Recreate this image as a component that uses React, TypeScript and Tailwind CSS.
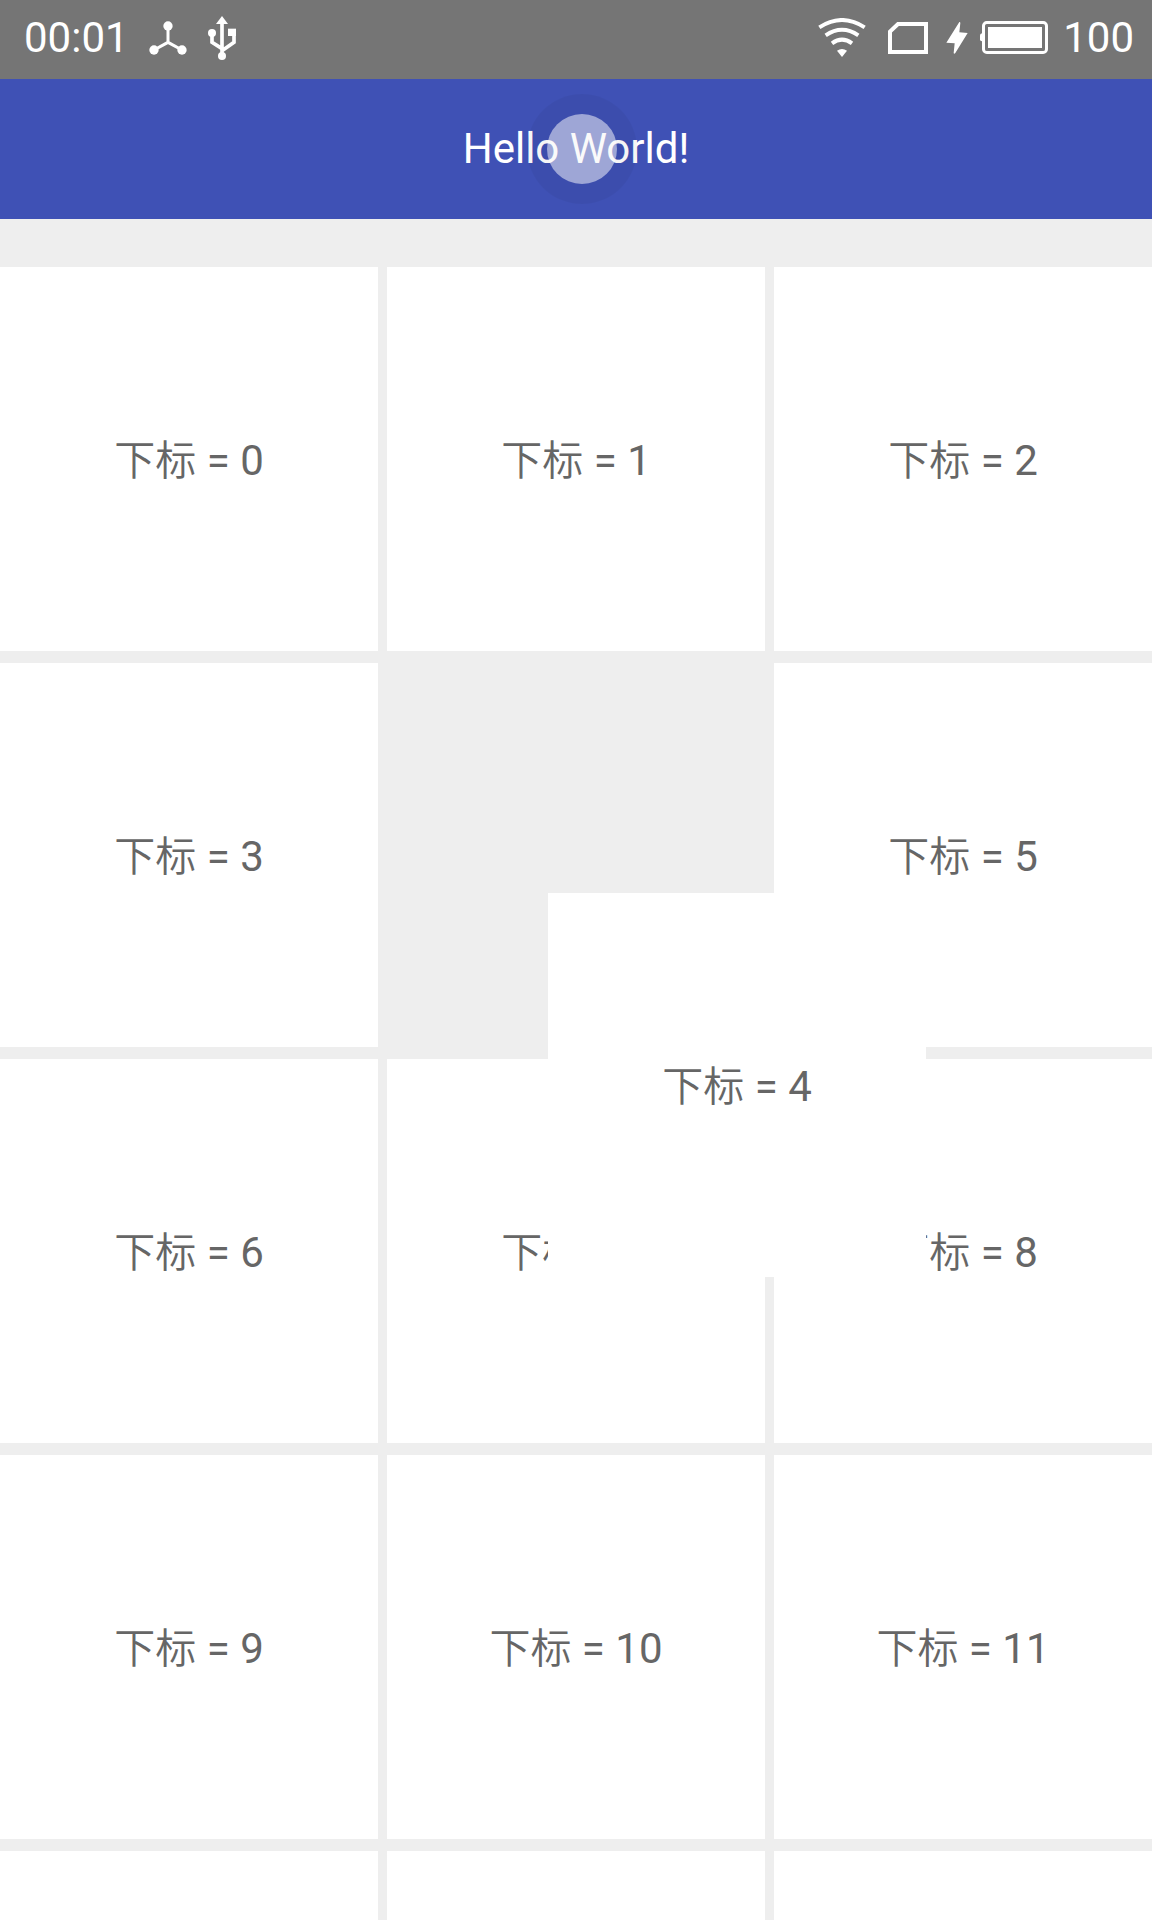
import React from "react";

type Drag = { x: number; y: number };
type Item = { index: number; drag?: Drag };

const items: Item[] = Array.from({ length: 12 }, (_, index) =>
  index === 4 ? { index, drag: { x: 161, y: 230 } } : { index }
);

function NetworkIcon() {
  return (
    <svg viewBox="0 0 114 102" className="h-[34px] w-[38px]" fill="currentColor" aria-hidden="true">
      <path d="M57 16V64M15 87L57 64L99 87" fill="none" stroke="currentColor" strokeWidth="9" />
      <circle cx="57" cy="15" r="14" />
      <circle cx="15" cy="87" r="14" />
      <circle cx="99" cy="87" r="14" />
    </svg>
  );
}

function UsbIcon() {
  return (
    <svg viewBox="0 0 84 132" className="h-11 w-7" fill="currentColor" aria-hidden="true">
      <path d="M42 0L60 24H24Z" />
      <path d="M42 20V120M12 52V79L42 98M78 56V79L42 104" fill="none" stroke="currentColor" strokeWidth="11" />
      <circle cx="12" cy="51" r="12" />
      <circle cx="42" cy="120" r="12" />
      <path d="M60 38H84V60H60Z" />
    </svg>
  );
}

function WifiIcon() {
  return (
    <svg viewBox="0 0 144 117" className="h-[39px] w-12" fill="none" stroke="currentColor" strokeWidth="12" aria-hidden="true">
      <path d="M4 28Q72 -16 140 28" />
      <path d="M23 52Q72 19 121 52" />
      <path d="M42 76Q72 54 102 76" />
      <path d="M57 98Q72 88 87 98L72 117Z" fill="currentColor" stroke="none" />
    </svg>
  );
}

function SimIcon() {
  return (
    <svg viewBox="0 0 120 96" className="h-8 w-10" fill="none" stroke="currentColor" strokeWidth="12" aria-hidden="true">
      <path d="M30 6H114V90H6V29Z" />
    </svg>
  );
}

function BoltIcon() {
  return (
    <svg viewBox="0 0 66 96" className="h-8 w-[22px]" fill="currentColor" aria-hidden="true">
      <path d="M40 0L1 62L26 64L23 93Q24 97 28 93L65 33L40 31L43 3Q42 -1 40 0Z" />
    </svg>
  );
}

function BatteryIcon() {
  return (
    <svg viewBox="0 0 204 99" className="h-[33px] w-[68px]" aria-hidden="true">
      <rect x="10.500" y="4.500" width="189" height="90" rx="10" fill="none" stroke="currentColor" strokeWidth="9" />
      <rect x="24" y="18" width="162" height="63" fill="currentColor" />
      <path d="M6 37Q0 39 0 43V56Q0 60 6 61Z" fill="currentColor" />
    </svg>
  );
}

function StatusBar() {
  return (
    <div className="flex h-[79px] shrink-0 items-center justify-between bg-[#757575] pr-[18px] pb-1 pl-6 text-white">
      <div className="flex items-center">
        <time className="mr-5">00:01</time>
        <NetworkIcon />
        <span className="ml-[21px]">
          <UsbIcon />
        </span>
      </div>
      <div className="flex items-center">
        <WifiIcon />
        <span className="ml-[22px]">
          <SimIcon />
        </span>
        <span className="ml-[18px]">
          <BoltIcon />
        </span>
        <span className="ml-3">
          <BatteryIcon />
        </span>
        <span className="ml-[15px]">100</span>
      </div>
    </div>
  );
}

function TouchPoint() {
  return (
    <span className="absolute top-1/2 left-1/2 ml-1.5 flex size-[110px] -translate-x-1/2 -translate-y-1/2 items-center justify-center rounded-full bg-black/4">
      <span className="size-[70px] rounded-full bg-white/50" />
    </span>
  );
}

function Tile({ index, drag }: Item) {
  return (
    <li
      className={
        drag
          ? "relative z-10 flex h-96 items-center justify-center bg-white pt-1"
          : "flex h-96 items-center justify-center bg-white pt-1"
      }
      style={drag ? { transform: `translate(${drag.x}px, ${drag.y}px)` } : undefined}
    >
      <span>
        <span className="text-[41px] font-[350]">下标</span> = {index}
      </span>
    </li>
  );
}

export default function App() {
  return (
    <div className="flex h-screen flex-col overflow-hidden bg-[#eeeeee] font-[Roboto,'Noto_Sans_CJK_SC',sans-serif] text-[42px] leading-[50px] text-[#666666]">
      <StatusBar />
      <header className="relative flex h-[140px] shrink-0 items-center justify-center bg-[#3f51b5] text-white">
        <h1>Hello World!</h1>
        <TouchPoint />
      </header>
      <main className="flex min-h-0 flex-1 flex-col gap-3 pt-12">
        <ul className="grid grid-cols-3 gap-x-[9px] gap-y-3">
          {items.map((item) => (
            <Tile key={item.index} {...item} />
          ))}
        </ul>
        <div className="grid flex-1 grid-cols-3 gap-x-[9px]" aria-hidden="true">
          <div className="bg-white" />
          <div className="bg-white" />
          <div className="bg-white" />
        </div>
      </main>
    </div>
  );
}
